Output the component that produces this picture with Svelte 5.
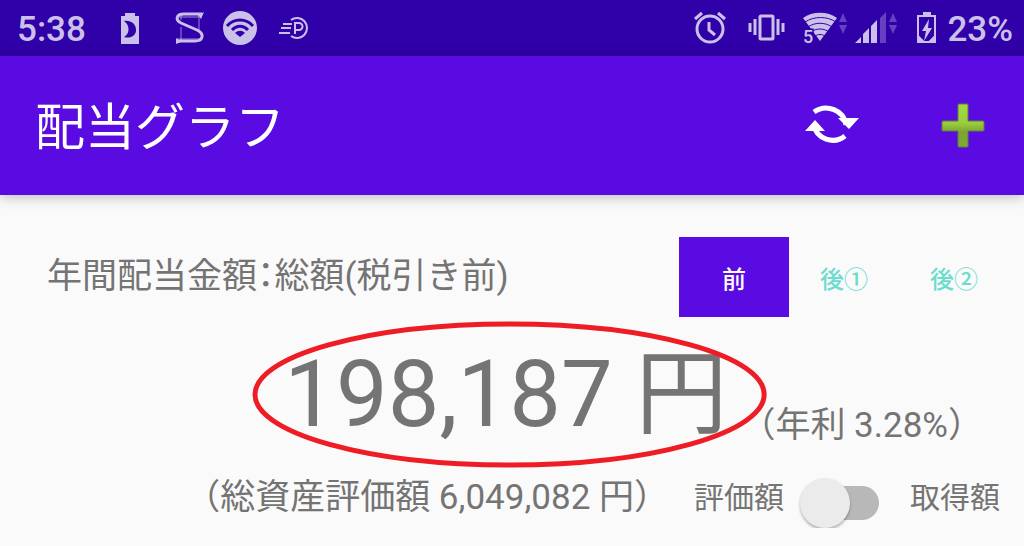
<script lang="ts">
  const periods = ['前', '後①', '後②'];

  let selected = $state(0);
  let useCost = $state(false);
</script>

<div class="status-bar">
  <span class="clock">5:38</span>
  <div class="notifications">
    <svg width="40" height="56" viewBox="0 0 40 56" aria-hidden="true">
      <path class="fill" fill-rule="evenodd" d="M15 13h10v3h4v28H11V16h4zM14 21c7-1 12 3 12 9s-6 9-12 7c6-3 6-12 0-16z" />
    </svg>
    <svg width="40" height="56" viewBox="0 0 40 56" aria-hidden="true">
      <path class="line thin" d="M16 15v5M16 27v14M34 15v15M12 39h24M14 17h20" />
      <path class="line s-curve" d="M37 14H19c-8 0-9 6-3 9l16 7c8 4 6 11-2 11H12" />
      <path class="fill" d="M39 12l-3 7-3-4zM11 44v-6l5 4z" />
    </svg>
    <svg width="40" height="56" viewBox="0 0 40 56" aria-hidden="true">
      <circle class="fill" cx="20" cy="28" r="17" />
      <path class="cut" d="M7 26c7-8 19-8 26 0M12 30c5-5 11-5 16 0" />
      <path class="cut-fill" d="M15 33c3-3 7-3 10 0l-5 4z" />
    </svg>
    <svg width="40" height="56" viewBox="0 0 40 56" aria-hidden="true">
      <path class="line" d="M16 20a10 10 0 1 1 0 16M8 24h9M6 28h10M4 33h11" />
      <path class="line" d="M20 34V23h4a3 3 0 0 1 0 7h-4" />
    </svg>
  </div>
  <div class="system">
    <svg width="50" height="56" viewBox="0 0 50 56" aria-hidden="true">
      <circle class="line alarm" cx="18" cy="29" r="13" />
      <path class="line alarm" d="M17 22v8l6 5M3 19l7-6M33 19l-7-6" />
    </svg>
    <svg width="50" height="56" viewBox="0 0 50 56" aria-hidden="true">
      <rect class="line alarm" x="14" y="16" width="13" height="23" rx="1" />
      <path class="line alarm" d="M9 19v16M32 19v16M4 23v9M37 23v9" />
    </svg>
    <svg width="50" height="56" viewBox="0 0 50 56" aria-hidden="true">
      <path class="fill" d="M3 18c9-7 25-7 34 0L20 41z" />
      <path class="gap" d="M5 22c9-6 22-6 31 0M8 27c7-5 17-5 24 0M11 32c5-4 13-4 18 0M15 36c3-2 7-2 10 0" />
      <text x="3" y="43">5</text>
      <path class="dim" d="M39 22l4-9 4 9zM39 25h8l-4 9z" />
    </svg>
    <svg width="55" height="56" viewBox="0 0 55 56" aria-hidden="true">
      <path class="fill" d="M1 43l6-6v6zM9 43v-9l6-6v15zM17 43V26l6-6v23z" />
      <path class="dim" d="M26 43V18l6-6v31zM35 22l4-9 4 9zM35 25h8l-4 9z" />
    </svg>
    <svg width="30" height="56" viewBox="0 0 30 56" aria-hidden="true">
      <path class="fill" fill-rule="evenodd" d="M10 12h8v3h5v28H4V15h6zM6 17v19l5 5h5l5-5V17z" />
      <path class="fill" d="M16 19L9 31h4l-2 10 8-13h-4z" />
      <path class="fill" d="M4 34l8 8v1H4zM23 34l-8 8v1h8z" />
    </svg>
    <span class="battery">23%</span>
  </div>
</div>

<header class="app-bar">
  <h1>配当グラフ</h1>
  <button class="action" aria-label="更新">
    <svg width="60" height="60" viewBox="0 0 60 60" aria-hidden="true">
      <path class="arc" d="M12 16a20 19 0 0 1 32 13" />
      <path class="arc" d="M43 40a19 18 0 0 1-31-11" />
      <path class="tip" d="M36 22h21l-10 11zM3 35l10-11 10 11z" />
    </svg>
  </button>
  <button class="action" aria-label="追加">
    <svg width="60" height="60" viewBox="0 0 60 60" aria-hidden="true">
      <defs>
        <linearGradient id="green" x1="0" y1="0" x2="0" y2="1">
          <stop offset="0" stop-color="#a2dc42" />
          <stop offset="0.45" stop-color="#98cd3e" />
          <stop offset="0.65" stop-color="#7ca432" />
          <stop offset="1" stop-color="#80aa34" />
        </linearGradient>
      </defs>
      <path class="plus" fill="url(#green)" d="M26 8h8q1 0 1 1v16h15q1 0 1 1v8q0 1-1 1H35v15q0 1-1 1h-8q-1 0-1-1V35H10q-1 0-1-1v-8q0-1 1-1h15V9q0-1 1-1z" />
    </svg>
  </button>
</header>

<main>
  <section class="heading">
    <h2>年間配当金額<span class="colon">：</span>総額(税引き前)</h2>
    <div class="periods">
      {#each periods as period, i}
        <button class:active={selected === i} onclick={() => (selected = i)}>{period}</button>
      {/each}
    </div>
  </section>

  <section class="total">
    <div class="amount">
      198,187 円
      <svg class="ring" aria-hidden="true">
        <ellipse cx="50%" cy="50%" rx="50%" ry="50%" />
      </svg>
    </div>
    <span class="rate">（年利 3.28%）</span>
  </section>

  <section class="assets">
    <span class="asset-total">（総資産評価額 6,049,082 円）</span>
    <label for="basis">評価額</label>
    <input id="basis" type="checkbox" role="switch" bind:checked={useCost} />
    <label for="basis">取得額</label>
  </section>
</main>

<style>
  :global(body) {
    background: #fafafa;
    color: #747474;
    font-family: Roboto, 'Noto Sans CJK JP', sans-serif;
  }

  button {
    border: none;
    padding: 0;
    font-family: inherit;
    cursor: pointer;
  }

  svg {
    display: block;
    flex: none;
  }

  .status-bar {
    display: flex;
    align-items: center;
    height: 56px;
    padding: 0 11px 0 17px;
    background: #3000a8;
    color: #cbc0ea;
    font-size: 35px;
    font-weight: 500;
    line-height: 52px;
  }

  .clock,
  .battery {
    padding-top: 4px;
  }

  .notifications {
    display: flex;
    gap: 15px;
    margin-left: 24px;
  }

  .system {
    display: flex;
    gap: 4px;
    margin-left: auto;
  }

  .fill {
    fill: #cbc0ea;
  }

  .dim {
    fill: #6540c2;
  }

  .line {
    fill: none;
    stroke: #cbc0ea;
    stroke-width: 2;
  }

  .thin {
    stroke-width: 1;
    opacity: 0.7;
  }

  .s-curve,
  .alarm {
    stroke-width: 3;
  }

  .cut,
  .gap {
    fill: none;
    stroke: #3000a8;
    stroke-width: 3;
  }

  .gap {
    stroke-width: 1;
  }

  .cut-fill {
    fill: #3000a8;
  }

  .status-bar text {
    fill: #cbc0ea;
    stroke: #3000a8;
    stroke-width: 3;
    paint-order: stroke;
    font-size: 18px;
  }

  .app-bar {
    display: flex;
    align-items: center;
    gap: 71px;
    height: 139px;
    padding: 0 31px 0 35px;
    background: #5a0be2;
    box-shadow: 0 2px 12px rgba(0, 0, 0, 0.25);
  }

  h1 {
    flex: 1;
    margin: 0;
    padding-top: 4px;
    color: #fff;
    font-size: 50px;
    font-weight: 400;
    line-height: 60px;
  }

  .action {
    background: none;
  }

  .arc {
    fill: none;
    stroke: #fff;
    stroke-width: 5;
  }

  .tip {
    fill: #fff;
  }

  .plus {
    stroke: #5c8040;
    stroke-width: 1;
  }

  main {
    padding-top: 42px;
  }

  section {
    display: flex;
  }

  .heading {
    justify-content: space-between;
    align-items: center;
    padding: 0 15px 0 47px;
  }

  h2 {
    margin: 0;
    font-size: 35px;
    font-weight: 400;
    line-height: 76px;
  }

  .colon {
    font-feature-settings: 'halt';
  }

  .periods {
    display: flex;
  }

  .periods button {
    width: 110px;
    height: 80px;
    background: none;
    color: #6bdccd;
    font-size: 24px;
    font-weight: 500;
  }

  .periods .active {
    background: #5a0be2;
    color: #fff;
  }

  .total {
    justify-content: flex-end;
    align-items: flex-end;
    gap: 13px;
    margin-top: 8px;
    padding-right: 41px;
  }

  .amount {
    position: relative;
    padding-bottom: 8px;
    font-size: 92px;
    line-height: 140px;
  }

  .ring {
    position: absolute;
    top: -1px;
    left: -29px;
    width: calc(100% + 66px);
    height: calc(100% - 7px);
    overflow: visible;
    pointer-events: none;
  }

  .ring ellipse {
    fill: none;
    stroke: #ee1c25;
    stroke-width: 5;
  }

  .rate {
    font-size: 35px;
    line-height: 94px;
  }

  .assets {
    justify-content: flex-end;
    align-items: flex-start;
    padding-right: 24px;
    font-size: 35px;
    line-height: 50px;
  }

  .asset-total {
    margin-right: 25px;
  }

  label {
    font-size: 30px;
  }

  input {
    position: relative;
    appearance: none;
    width: 79px;
    height: 50px;
    margin: 5px 31px 0 16px;
    cursor: pointer;
  }

  input::before {
    content: '';
    position: absolute;
    inset: 8px 0 8px 10px;
    border-radius: 17px;
    background: #b8b8b8;
  }

  input::after {
    content: '';
    position: absolute;
    top: 0;
    left: 0;
    width: 50px;
    height: 50px;
    border-radius: 50%;
    background: #ebebeb;
    box-shadow: 0 2px 3px rgba(0, 0, 0, 0.3);
  }

  input:checked::after {
    left: 29px;
  }
</style>
